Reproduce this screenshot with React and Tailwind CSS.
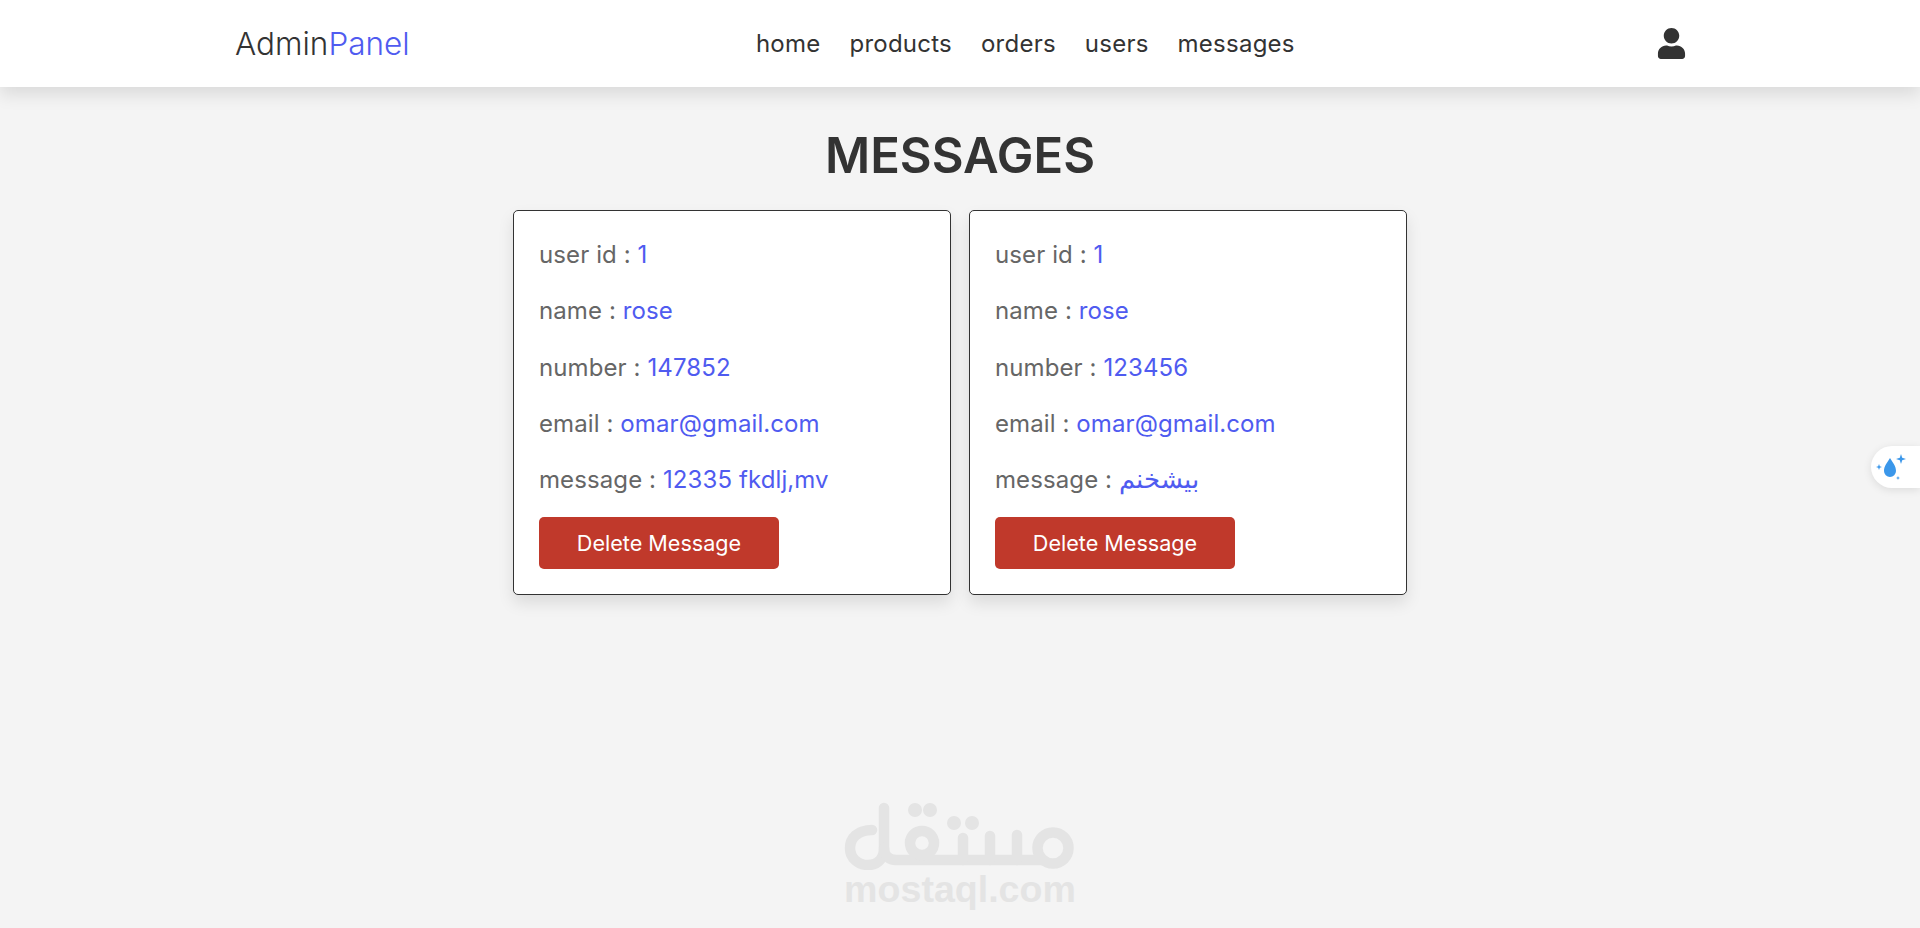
import { FaUser } from "react-icons/fa";

const messages = [
  { id: 1, name: "rose", number: "147852", email: "omar@gmail.com", message: "12335 fkdlj,mv" },
  { id: 1, name: "rose", number: "123456", email: "omar@gmail.com", message: "بيشخنم", arabic: true },
];

const links = ["home", "products", "orders", "users", "messages"];

function Row({ label, value, large }) {
  return (
    <p className="h-[36px] text-[24px] leading-[36px] tracking-[0.1px] text-[#666666]">
      {label} : <span className={large ? "text-[25.5px] leading-none text-[#4f5bf0]" : "text-[#4f5bf0]"}>{value}</span>
    </p>
  );
}

function MessageCard({ item }) {
  return (
    <div className="bg-white rounded-[5px] border border-[#333333] shadow-[0_8px_16px_rgba(0,0,0,0.1)] pt-[26px] px-[25px] h-[385px]">
      <div className="flex flex-col gap-[20.25px]">
        <Row label="user id" value={item.id} />
        <Row label="name" value={item.name} />
        <Row label="number" value={item.number} />
        <Row label="email" value={item.email} />
        <Row label="message" value={item.message} large={item.arabic} />
      </div>
      <button className="mt-[19px] block w-[240px] h-[52px] rounded-[5px] bg-[#c0392b] text-white text-[21.6px]">
        Delete Message
      </button>
    </div>
  );
}

function MostaqlLogo() {
  return (
    <svg viewBox="20 20 240 70" className="w-[240px] h-[70px]" fill="none" stroke="#e4e4e4" strokeWidth="10.5" strokeLinecap="round">
      <path d="M52 50C38 50 30 58 30 68C30 78 38 85 48 85C58 85 64 78 64 68V28" />
      <path d="M64 68C64 76 70 80 76 80H222" />
      <circle cx="102" cy="63" r="12" />
      <path d="M143 58V80M170 56V80M197 55V80" />
      <circle cx="233" cy="68" r="15.5" />
      <circle cx="95" cy="30" r="7" fill="#e4e4e4" stroke="none" />
      <circle cx="110" cy="30" r="7" fill="#e4e4e4" stroke="none" />
      <circle cx="134" cy="43" r="7" fill="#e4e4e4" stroke="none" />
      <circle cx="152" cy="43" r="7" fill="#e4e4e4" stroke="none" />
    </svg>
  );
}

export default function App() {
  return (
    <div className="relative min-h-screen h-[928px] overflow-hidden bg-[#f4f4f4] font-['Inter','Noto_Sans',sans-serif]">
      <header className="h-[87px] bg-white shadow-[0_8px_16px_rgba(0,0,0,0.1)]">
        <div className="ml-[235px] w-[1452px] h-full flex items-center justify-between">
          <a className="text-[31.5px] font-light text-[#333333]">
            Admin<span className="text-[#4f5bf0]">Panel</span>
          </a>
          <nav className="flex items-center gap-[29px] text-[24px] tracking-[0.01em] text-[#333333] ml-[-15px]">
            {links.map((l) => (
              <a key={l}>{l}</a>
            ))}
          </nav>
          <FaUser size={31} color="#333333" />
        </div>
      </header>

      <h1 className="mt-[39px] text-center text-[49px] leading-[60px] font-semibold text-[#333333]">
        MESSAGES
      </h1>

      <section className="mt-[24px] mx-auto w-[894px] grid grid-cols-2 gap-[18px]">
        {messages.map((m, i) => (
          <MessageCard key={i} item={m} />
        ))}
      </section>

      {/* floating widget tab */}
      <div className="absolute left-[1871px] top-[446px] w-[49px] h-[42px] rounded-l-full bg-white shadow-[0_2px_8px_rgba(0,0,0,0.1)]">
        <svg viewBox="0 0 49 42" className="w-[49px] h-[42px]" fill="#3b97ea">
          <path d="M19 12C22 17 25 20 25 25a6 6 0 0 1-12 0C13 20 16 17 19 12z" />
          <path d="M30 8l1.2 3.8 3.8 1.2-3.8 1.2L30 18l-1.2-3.8-3.8-1.2 3.8-1.2zM8 18l.8 2.2 2.2.8-2.2.8L8 24l-.8-2.2L5 21l2.2-.8zM27 30l.6 1.4 1.4.6-1.4.6-.6 1.4-.6-1.4-1.4-.6 1.4-.6z" />
        </svg>
      </div>

      {/* watermark */}
      <div className="absolute left-[840px] top-[800px] w-[240px] flex flex-col items-center">
        <MostaqlLogo />
        <span className="font-['Liberation_Sans',sans-serif] font-bold text-[37.6px] leading-[38px] text-[#e4e4e4]">
          mostaql.com
        </span>
      </div>
    </div>
  );
}
